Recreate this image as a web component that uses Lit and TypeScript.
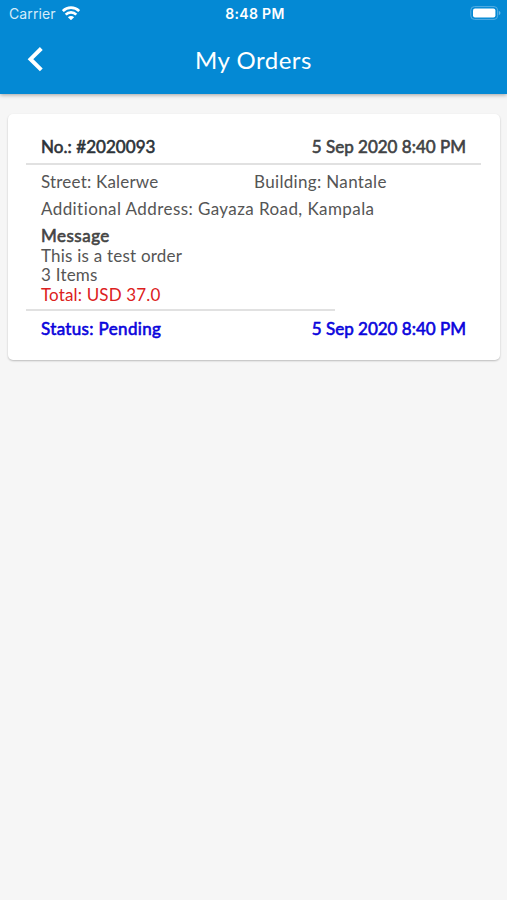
import { LitElement, html, css } from "lit";
import { customElement } from "lit/decorators.js";

@customElement("status-bar")
class StatusBar extends LitElement {
  static styles = css`
    :host { display: grid; grid-template-columns: 1fr auto 1fr; align-items: center; height: 28px; padding: 0 6px 0 9px;
      color: #fff; font: 14px/20px Inter, sans-serif; }
    .carrier { display: flex; align-items: center; gap: 6px; letter-spacing: 0.1px; color: #d5ecf9; }
    .time { font-size: 14px; font-weight: 600; letter-spacing: 0.3px; }
    .battery { justify-self: end; margin-top: -2px; }
    svg { display: block; }
    .wifi { margin-top: -3px; }
  `;
  render() {
    return html`
      <div class="carrier"><span>Carrier</span>
        <svg class="wifi" width="18" height="14" viewBox="0 0 18 14" fill="none" stroke="#fff" stroke-width="2.7">
          <path d="M0.8 5.1a11.6 11.6 0 0 1 16.4 0"/>
          <path d="M3.7 8.6a7.5 7.5 0 0 1 10.6 0"/>
          <path d="M9 14.2 5.9 11.3a4.1 4.1 0 0 1 6.2 0z" fill="#fff" stroke="none"/>
        </svg>
      </div>
      <div class="time">8:48 PM</div>
      <svg class="battery" width="31" height="14" viewBox="0 0 31 14">
        <rect x="0.8" y="0.6" width="26.8" height="12.8" rx="3.6" fill="none" stroke="#55aee3" stroke-width="1"/>
        <rect x="3" y="2.5" width="22.4" height="9" rx="2" fill="#fff"/>
        <path d="M28.8 4.8q1.7 .8 1.7 2.2t-1.7 2.2z" fill="#66b8e6"/>
      </svg>`;
  }
}

@customElement("nav-bar")
class NavBar extends LitElement {
  static styles = css`
    :host { display: grid; grid-template-columns: 1fr auto 1fr; align-items: center; height: 65.5px; color: #fff; }
    svg { display: block; margin: -4px 0 0 26px; }
    h1 { margin: -1px 0 0; font: 400 24px/30px Lato, sans-serif; letter-spacing: 0.5px; }
  `;
  render() {
    return html`
      <svg width="18" height="26" viewBox="0 0 18 26" fill="none" stroke="#fff" stroke-width="4">
        <path d="M15.3 2.5 4.5 13.2l10.8 10.7"/>
      </svg>
      <h1>My Orders</h1>`;
  }
}

@customElement("order-card")
class OrderCard extends LitElement {
  static styles = css`
    :host { display: block; box-sizing: border-box; height: 246px; margin: 20.5px 7px 0 8px; padding: 23px 19px 0 18px;
      background: #fff; border-radius: 5px; box-shadow: 0 1px 2px rgba(0,0,0,.24);
      font: 17px/20px Lato, sans-serif; color: #555; font-variant-ligatures: none; }
    .row { display: flex; justify-content: space-between; padding: 0 15px; }
    .line { height: 2px; background: #e1e1e1; }
    .head { color: #404244; }
    .number { color: #2c3338; letter-spacing: 0.05px; }
    .strong { -webkit-text-stroke: 0.6px currentColor; }
    .rule { margin: 6px 0 7px; }
    .address { display: grid; grid-template-columns: 213px 1fr; }
    .street { letter-spacing: 0.2px; }
    .building { letter-spacing: 0.34px; }
    .full { letter-spacing: 0.42px; }
    .extra { margin-top: 7px; }
    .message { padding: 7px 15px 0; line-height: 19.5px; letter-spacing: 0.22px; }
    .title { color: #444; letter-spacing: 0.5px; }
    .total { color: #dc2020; letter-spacing: 0.15px; }
    .short { width: 309px; margin: 5px 0 8px; }
    .status { color: #0a04dc; }
    .state { letter-spacing: 0.35px; }
  `;
  render() {
    return html`
      <div class="row head strong"><span class="number">No.: #2020093</span><span class="date">5 Sep 2020 8:40 PM</span></div>
      <div class="line rule"></div>
      <div class="row address"><span class="street">Street: Kalerwe</span><span class="building">Building: Nantale</span></div>
      <div class="row extra"><span class="full">Additional Address: Gayaza Road, Kampala</span></div>
      <div class="message">
        <div class="title strong">Message</div>
        <div class="note">This is a test order</div>
        <div class="items">3 Items</div>
        <div class="total">Total: USD 37.0</div>
      </div>
      <div class="line short"></div>
      <div class="row status strong"><span class="state">Status: Pending</span><span class="date">5 Sep 2020 8:40 PM</span></div>`;
  }
}

@customElement("app-root")
class AppRoot extends LitElement {
  static styles = css`
    :host { display: flow-root; height: 900px; background: #f6f6f6; overflow: hidden; }
    header { background: #0489d4; box-shadow: 0 1px 4px rgba(0,0,0,.35); }
  `;
  render() {
    return html`<header><status-bar></status-bar><nav-bar></nav-bar></header><order-card></order-card>`;
  }
}
